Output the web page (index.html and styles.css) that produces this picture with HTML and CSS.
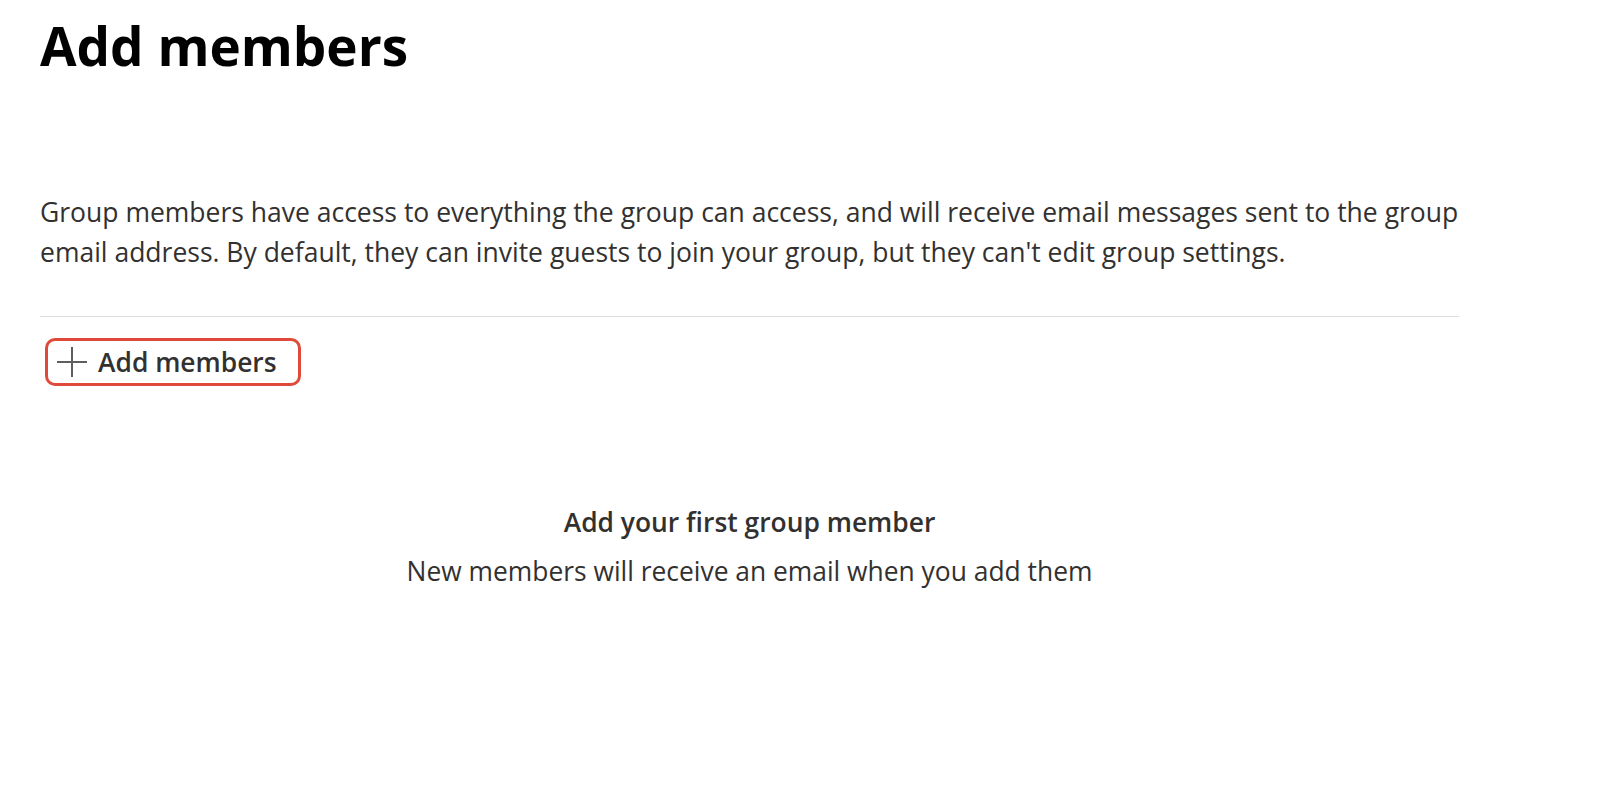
FILE: index.html
```html
<!DOCTYPE html>
<html lang="en">
<head>
    <meta charset="UTF-8">
    <title>Add members</title>
    <link rel="stylesheet" href="styles.css">
</head>
<body>
    <div class="page">
        <h1>Add members</h1>

        <p class="intro">Group members have access to everything the group can access, and will receive email messages sent to the group email address. By default, they can invite guests to join your group, but they can't edit group settings.</p>

        <div class="toolbar">
            <button type="button" class="add-btn">
                <svg class="plus" width="32" height="32" viewBox="0 0 32 32" aria-hidden="true">
                    <path d="M16 1v30M1 16h30" stroke="#605e5c" stroke-width="2" fill="none"/>
                </svg>
                <span>Add members</span>
            </button>
        </div>

        <div class="empty">
            <div class="empty-title">Add your first group member</div>
            <div class="empty-text">New members will receive an email when you add them</div>
        </div>
    </div>
</body>
</html>
```

FILE: styles.css
```css
body {
    margin: 0;
    background-color: #fff;
    font-family: "Open Sans", "Noto Sans", Arial, sans-serif;
    color: #323130;
}
.page {
    width: 1419px;
    padding: 8px 40px 0;
}
h1 {
    margin: 0;
    font-size: 53px;
    line-height: 75px;
    font-weight: 700;
    color: #000;
}
.intro {
    margin: 109px 0 0;
    font-size: 26.5px;
    line-height: 40px;
    padding-bottom: 44px;
    border-bottom: 1px solid #e1dfdd;
}
.toolbar {
    padding: 21px 0 0 5px;
}
.add-btn {
    display: flex;
    align-items: center;
    gap: 10px;
    height: 48px;
    padding: 0 21px 0 8px;
    background: #fff;
    border: 3px solid #e04a3a;
    border-radius: 10px;
    font-family: inherit;
    font-size: 26.4px;
    font-weight: 600;
    color: #323130;
    cursor: pointer;
}
.plus {
    display: block;
}
.empty {
    margin-top: 116px;
    text-align: center;
}
.empty-title {
    font-size: 26.4px;
    line-height: 40px;
    font-weight: 600;
}
.empty-text {
    margin-top: 9px;
    font-size: 26.4px;
    line-height: 40px;
}
```
